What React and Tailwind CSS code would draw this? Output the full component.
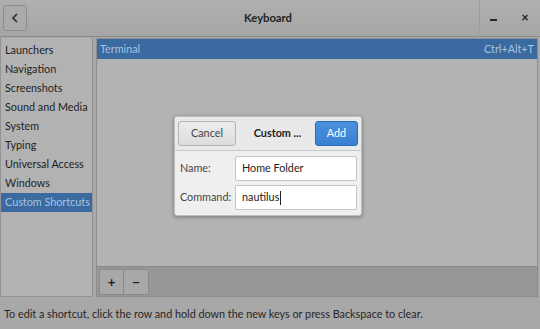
import React from "react";

const items = ["Launchers","Navigation","Screenshots","Sound and Media","System","Typing","Universal Access","Windows","Custom Shortcuts"];

export default function App() {
  return (
    <div className="relative w-[540px] h-[329px] bg-[#a8a8a8] flex flex-col overflow-hidden text-[10.8px] text-[#1f1f1f]" style={{fontFamily:'Lato, "Noto Sans", sans-serif'}}>
      {/* header */}
      <div className="h-[37px] flex items-center border-b border-[#8a8a8a] bg-gradient-to-b from-[#afafaf] to-[#a6a6a6] shrink-0">
        <div className="ml-[3px] w-[24px] h-[26px] rounded-[3px] border border-[#8c8c8c] bg-[#aaaaaa] flex items-center justify-center">
          <svg width="8" height="10" viewBox="0 0 8 10"><path d="M6 1 L2 5 L6 9" stroke="#2a2a2a" strokeWidth="1.6" fill="none"/></svg>
        </div>
        <div className="flex-1 text-center font-bold text-[11.2px] text-[#222] pl-[30px]">Keyboard</div>
        <div className="w-px h-[37px] bg-[#9c9c9c]"></div>
        <div className="w-[30px] flex justify-center pt-[3px] pr-[4px]"><div className="w-[7px] h-[2px] bg-[#2a2a2a]"></div></div>
        <div className="w-[30px] flex justify-center font-bold text-[13px]">×</div>
      </div>
      <div className="flex h-[260px] pt-[1px] shrink-0">
        <div className="w-[93px] border border-[#939393] border-t-0 bg-[#b2b2b2] flex flex-col">
          <div className="h-[3px]"></div>
          {items.map((it,i)=>(
            <div key={it} className={"h-[19px] pl-[4px] flex items-center whitespace-nowrap " + (i===8 ? "bg-[#3a6aa0] text-[#a9c3e2]" : "")}>{it}</div>
          ))}
        </div>
        <div className="w-[3px]"></div>
        <div className="flex-1 border border-[#8e8e8e] mr-[2px] flex flex-col">
          <div className="h-[20px] bg-[#3a6aa0] text-[#a9c3e2] flex items-center justify-between px-[3px]"><span>Terminal</span><span>Ctrl+Alt+T</span></div>
          <div className="flex-1 bg-[#b3b3b3]"></div>
          <div className="h-[30px] bg-[#979797] border-t border-[#888] flex items-center pl-[2px]">
            <div className="flex border border-[#8a8a8a] rounded-[2px]">
              <div className="w-[24px] h-[24px] bg-[#a8a8a8] flex items-center justify-center font-bold text-[14px] border-r border-[#8a8a8a]">+</div>
              <div className="w-[24px] h-[24px] bg-[#a8a8a8] flex items-center justify-center font-bold text-[14px]">−</div>
            </div>
          </div>
        </div>
      </div>
      <div className="flex-1 flex items-center pl-[4px] pt-[3px] text-[#262626]">To edit a shortcut, click the row and hold down the new keys or press Backspace to clear.</div>

      {/* dialog */}
      <div className="absolute left-[174px] top-[116px] w-[188px] h-[100px] bg-[#efefef] border border-[#bdbdbd] rounded-[3px] shadow-[0_1px_4px_rgba(0,0,0,0.35)] flex flex-col">
        <div className="h-[34px] flex items-center px-[3px] border-b border-[#c8c8c8] bg-[#e9e9e9] rounded-t-[3px]">
          <div className="w-[58px] h-[25px] rounded-[3px] border border-[#b4b4b4] bg-gradient-to-b from-[#ececec] to-[#dcdcdc] flex items-center justify-center text-[#444]">Cancel</div>
          <div className="flex-1 text-center font-bold text-[#222] pl-[4px]">Custom ...</div>
          <div className="w-[43px] h-[25px] rounded-[3px] border border-[#2a6bb5] bg-gradient-to-b from-[#4a90dc] to-[#3a80d0] flex items-center justify-center text-white">Add</div>
        </div>
        <div className="flex-1 flex flex-col justify-center gap-[4px] pl-[5px] pr-[4px]">
          <div className="flex items-center">
            <div className="w-[55px] text-[#444]">Name:</div>
            <div className="flex-1 h-[25px] bg-white border border-[#c5c5c5] rounded-[2px] flex items-center pl-[6px] text-[#222]">Home Folder</div>
          </div>
          <div className="flex items-center">
            <div className="w-[55px] text-[#444]">Command:</div>
            <div className="flex-1 h-[25px] bg-white border border-[#c5c5c5] rounded-[2px] flex items-center pl-[6px] text-[#222]">nautilus<span className="w-px h-[14px] bg-[#222] ml-[1px]"></span></div>
          </div>
        </div>
      </div>
    </div>
  );
}
